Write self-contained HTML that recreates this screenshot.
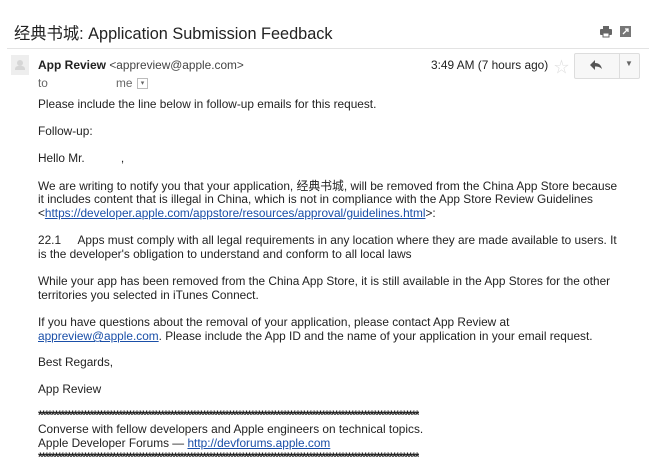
<!DOCTYPE html>
<html><head><meta charset="utf-8"><style>
body{margin:0;width:649px;height:471px;background:#fff;position:relative;overflow:hidden;font-family:"Liberation Sans","Noto Sans CJK SC",sans-serif;color:#222;}
.t{position:absolute;white-space:nowrap;font-size:11.85px;line-height:14px;left:38px;}
.s{position:absolute;left:38px;white-space:nowrap;font-size:12px;line-height:10px;height:7px;letter-spacing:-1.45px;overflow:hidden;width:381px;color:#222;font-weight:bold;}
a{color:#1a4fa8;text-decoration:underline;}
</style></head><body>
<div style="position:absolute;left:14px;top:20px;font-size:16.3px;color:#222;white-space:nowrap">经典书城: Application Submission Feedback</div>
<svg style="position:absolute;left:598px;top:24px" width="40" height="16">
<rect x="2" y="5" width="12" height="6" rx="1" fill="#666"/><rect x="5" y="2" width="6" height="3" fill="#666"/><rect x="5" y="9" width="6" height="4" fill="#fff" stroke="#666"/>
<rect x="22" y="2" width="11" height="11" fill="#777"/><path d="M25 10 L30 5 M27 5 H30 V8" stroke="#fff" stroke-width="1.3" fill="none"/>
</svg>
<div style="position:absolute;left:7px;top:48px;width:642px;height:1px;background:#e3e3e3"></div>
<div style="position:absolute;left:11px;top:55px;width:18px;height:20px;background:#eee"></div>
<div style="position:absolute;left:17px;top:60px;width:6px;height:6px;border-radius:3px;background:#d6d6d6"></div>
<div style="position:absolute;left:15px;top:66px;width:10px;height:4px;background:#d6d6d6;border-radius:3px 3px 0 0"></div>
<div class="t" style="top:58px;font-size:12px"><b>App Review</b> <span style="color:#444;font-size:11.85px">&lt;appreview@apple.com&gt;</span></div>
<div class="t" style="top:76px;color:#666">to</div>
<div class="t" style="top:76px;left:116px;color:#666">me</div>
<div style="position:absolute;left:137px;top:78px;width:9px;height:9px;border:1px solid #bbb;font-size:7px;color:#666;text-align:center;line-height:9px">▾</div>
<div class="t" style="top:58px;left:431px;">3:49 AM (7 hours ago)</div>
<div style="position:absolute;left:554px;top:56px;font-size:15px;color:#ddd">☆</div>
<div style="position:absolute;left:574px;top:53px;width:64px;height:24px;border:1px solid #ddd;border-radius:2px;background:#f7f7f7"></div>
<div style="position:absolute;left:619px;top:53px;width:1px;height:26px;background:#ddd"></div>
<svg style="position:absolute;left:588px;top:58px" width="16" height="14"><path d="M2 7 L7 2 V5 C11 5 13 7 14 11 C12 9 10 8.5 7 8.5 V12 Z" fill="#555"/></svg>
<div style="position:absolute;left:625px;top:59px;font-size:8px;color:#666">▼</div>
<div class="t" style="top:97px">Please include the line below in follow-up emails for this request.</div>
<div class="t" style="top:124px">Follow-up:</div>
<div class="t" style="top:151px">Hello Mr.&nbsp;&nbsp;&nbsp;&nbsp;&nbsp;&nbsp;&nbsp;&nbsp;&nbsp;&nbsp;&nbsp;,</div>
<div class="t" style="top:179px">We are writing to notify you that your application, 经典书城, will be removed from the China App Store because</div>
<div class="t" style="top:192px">it includes content that is illegal in China, which is not in compliance with the App Store Review Guidelines</div>
<div class="t" style="top:206px">&lt;<a>https://developer.apple.com/appstore/resources/approval/guidelines.html</a>&gt;:</div>
<div class="t" style="top:233px">22.1&nbsp;&nbsp;&nbsp;&nbsp;&nbsp;Apps must comply with all legal requirements in any location where they are made available to users. It</div>
<div class="t" style="top:247px">is the developer's obligation to understand and conform to all local laws</div>
<div class="t" style="top:274px">While your app has been removed from the China App Store, it is still available in the App Stores for the other</div>
<div class="t" style="top:288px">territories you selected in iTunes Connect.</div>
<div class="t" style="top:315px">If you have questions about the removal of your application, please contact App Review at</div>
<div class="t" style="top:329px"><a>appreview@apple.com</a>. Please include the App ID and the name of your application in your email request.</div>
<div class="t" style="top:355px">Best Regards,</div>
<div class="t" style="top:382px">App Review</div>
<div class="s" style="top:410px">****************************************************************************************************************************************</div>
<div class="t" style="top:422px">Converse with fellow developers and Apple engineers on technical topics.</div>
<div class="t" style="top:436px">Apple Developer Forums — <a>http://devforums.apple.com</a></div>
<div class="s" style="top:452px">****************************************************************************************************************************************</div>
</body></html>
